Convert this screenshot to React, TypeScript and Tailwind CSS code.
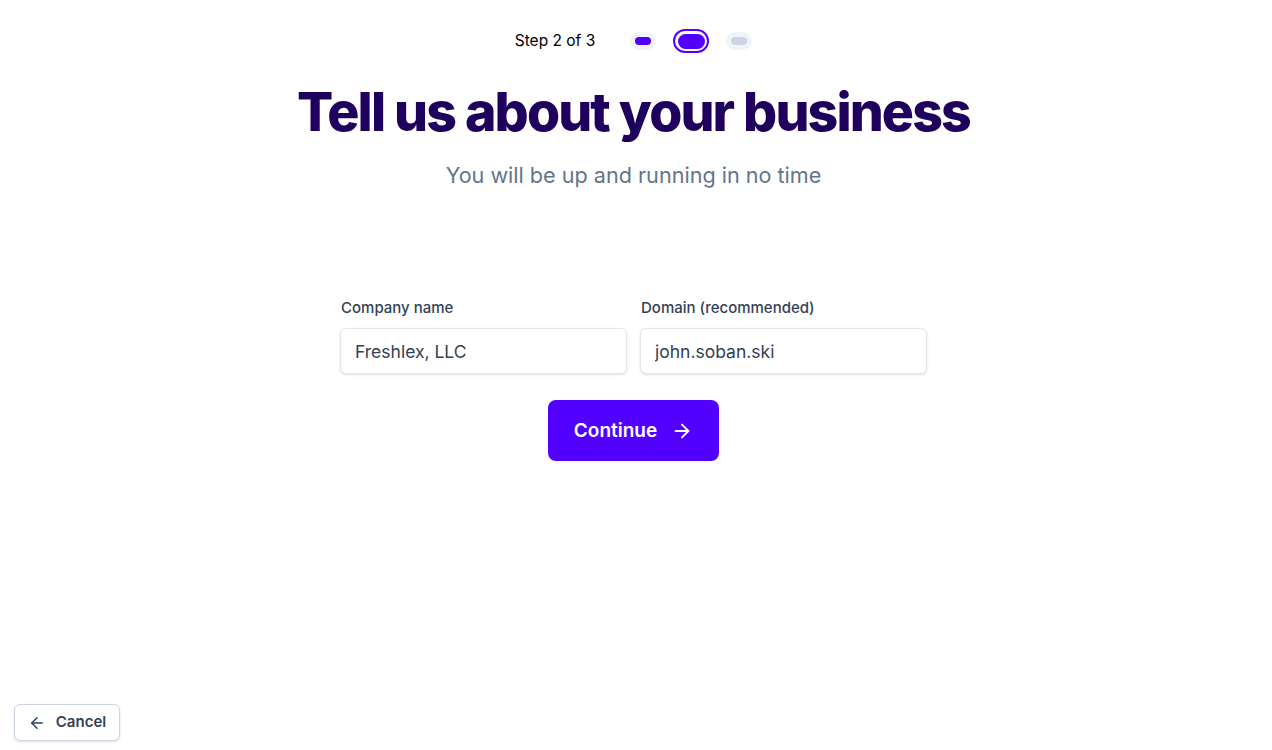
import { ArrowLeft, ArrowRight } from "lucide-react";

function StepDots() {
  return (
    <div className="flex items-center gap-[17px]">
      <div className="flex h-[18px] w-[26px] items-center justify-center rounded-full bg-[#f1f5f9]">
        <div className="h-[8px] w-[16px] rounded-full bg-[#5200ff]" />
      </div>
      <div className="flex h-[24px] w-[36px] items-center justify-center rounded-full border-2 border-[#5200ff] bg-white">
        <div className="h-[15px] w-[27px] rounded-full bg-[#5200ff]" />
      </div>
      <div className="flex h-[18px] w-[26px] items-center justify-center rounded-full bg-[#f1f5f9]">
        <div className="h-[8px] w-[16px] rounded-full bg-[#cbd5e1]" />
      </div>
    </div>
  );
}

type FieldProps = {
  label: string;
  value: string;
};

function Field({ label, value }: FieldProps) {
  return (
    <label className="flex w-[287px] flex-col">
      <span className="mb-[9px] pl-px text-[15px] font-medium text-[#334155]">{label}</span>
      <input
        defaultValue={value}
        className="h-[46px] rounded-md border border-[#e2e8f0] bg-white px-[14px] text-[17.5px] text-[#334155] shadow-sm outline-none"
      />
    </label>
  );
}

export default function App() {
  return (
    <div
      className="relative flex h-[750px] w-full flex-col items-center bg-white pr-[5px]"
      style={{ fontFamily: "Inter, 'Noto Sans', sans-serif" }}
    >
      <div className="mt-[29px] flex items-center gap-[35px]">
        <span className="text-[15.5px] text-black">Step 2 of 3</span>
        <StepDots />
      </div>

      <h1 className="mt-[32px] text-[53.6px] font-extrabold leading-none tracking-[-0.035em] text-[#1f005c]">
        Tell us about your business
      </h1>
      <p className="mt-[20px] text-[21.6px] text-[#64748b]">You will be up and running in no time</p>

      <div className="mt-[106px] flex gap-[13px]">
        <Field label="Company name" value="Freshlex, LLC" />
        <Field label="Domain (recommended)" value="john.soban.ski" />
      </div>

      <button className="mt-[26px] flex h-[61px] w-[171px] items-center justify-center gap-[14px] rounded-lg bg-[#5200ff] text-[19px] font-semibold text-white">
        Continue
        <ArrowRight size={22} strokeWidth={2} />
      </button>

      <button className="absolute bottom-[9px] left-[14px] flex h-[37px] w-[106px] items-center justify-center gap-[10px] rounded-md border border-[#cbd5e1] bg-white text-[15px] font-semibold text-[#334155] shadow-sm">
        <ArrowLeft size={18} strokeWidth={2} />
        Cancel
      </button>
    </div>
  );
}
